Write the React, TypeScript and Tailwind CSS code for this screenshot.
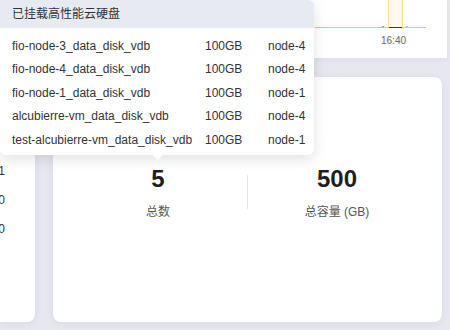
import React from "react";

const disks = [
  { name: "fio-node-3_data_disk_vdb", size: "100GB", node: "node-4" },
  { name: "fio-node-4_data_disk_vdb", size: "100GB", node: "node-4" },
  { name: "fio-node-1_data_disk_vdb", size: "100GB", node: "node-1" },
  { name: "alcubierre-vm_data_disk_vdb", size: "100GB", node: "node-4" },
  { name: "test-alcubierre-vm_data_disk_vdb", size: "100GB", node: "node-1" },
];

const font = "font-['Liberation_Sans','Noto_Sans_CJK_SC',sans-serif]";

export default function App() {
  return (
    <div className={`relative w-[450px] h-[330px] overflow-hidden bg-[#e6e7ef] ${font}`}>
      {/* 上方图表卡片 */}
      <div className="relative h-[58px] w-[448px] bg-white border-r border-[#e3e4ea] shadow-[0_2px_6px_rgba(0,0,0,0.04)]">
        <svg className="absolute left-[310px] top-0" width="130" height="58" viewBox="0 0 130 58">
          <rect x="78" y="0" width="15" height="27" fill="#fdf9ec" />
          <line x1="78.5" y1="0" x2="78.5" y2="27" stroke="#f7d978" strokeWidth="0.8" />
          <line x1="92.5" y1="0" x2="92.5" y2="27" stroke="#f7d978" strokeWidth="0.8" />
          <line x1="5" y1="27.5" x2="116" y2="27.5" stroke="#e8c460" strokeWidth="1" />
          <line x1="79" y1="27.5" x2="92" y2="27.5" stroke="#2a2fb0" strokeWidth="1" />
          <rect x="72" y="26" width="2" height="1" fill="#8c8ee0" />
          <rect x="96" y="26" width="2" height="1" fill="#b8b9e8" />
          <text x="83.5" y="44" textAnchor="middle" fontSize="10" fill="#666" fontFamily="Liberation Sans, sans-serif">
            16:40
          </text>
        </svg>
      </div>

      {/* 下方卡片 */}
      <div className="flex gap-[18px] mt-[19px] h-[245px]">
        <div className="w-[35px] bg-white rounded-r-lg shadow-[0_2px_8px_rgba(0,0,0,0.06)] flex flex-col items-end pr-[30px] pt-[87px] gap-[15px] text-[12px] text-[#333] leading-[14px]">
          <span>1</span>
          <span>0</span>
          <span>0</span>
        </div>
        <div className="w-[389px] bg-white rounded-lg shadow-[0_2px_8px_rgba(0,0,0,0.06)] px-4 pt-[86px]">
          <div className="flex">
            <div className="flex-1 flex flex-col items-center">
              <span className="text-[24px] font-bold text-[#1f1f1f] leading-[32px]">5</span>
              <span className="mt-[8px] text-[12px] text-[#555]">总数</span>
            </div>
            <div className="w-px h-[34px] mt-[12px] bg-[#e5e7ee]" />
            <div className="flex-1 flex flex-col items-center">
              <span className="text-[24px] font-bold text-[#1f1f1f] leading-[32px]">500</span>
              <span className="mt-[8px] text-[12px] text-[#555]">总容量 (GB)</span>
            </div>
          </div>
        </div>
      </div>

      {/* 悬浮提示 */}
      <div className="absolute left-0 top-0 w-[314px] h-[155px] bg-white rounded-b-md rounded-tr-md shadow-[0_4px_14px_rgba(0,0,0,0.12)]">
        <div className="h-[28px] bg-[#e8eaf2] pl-[12px] flex items-center text-[12px] text-[#333] rounded-tr-md">
          已挂载高性能云硬盘
        </div>
        <div className="pt-[6px] pl-[12px] text-[12px] text-[#333]">
          {disks.map((d) => (
            <div key={d.name} className="flex h-[23.5px] items-center">
              <span className="w-[193px] whitespace-nowrap">{d.name}</span>
              <span className="w-[63px]">{d.size}</span>
              <span>{d.node}</span>
            </div>
          ))}
        </div>
        <div className="absolute left-[152px] top-[154px] w-0 h-0 border-l-[6px] border-r-[6px] border-t-[6px] border-l-transparent border-r-transparent border-t-white" />
      </div>
    </div>
  );
}
